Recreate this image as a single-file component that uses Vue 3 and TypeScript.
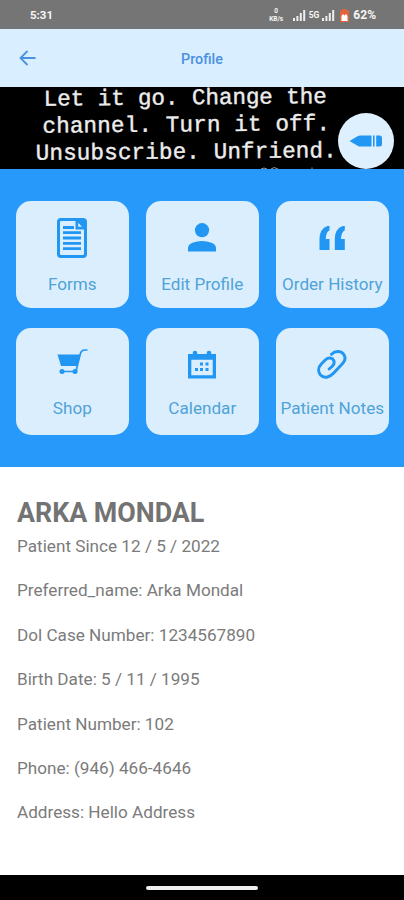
<script setup lang="ts">
interface Tile {
  label: string
  icon: 'forms' | 'person' | 'quote' | 'cart' | 'calendar' | 'link'
}

interface BannerLine {
  text: string
  x: number
  y: number
  width: number
}

const rows: Tile[][] = [
  [
    { label: 'Forms', icon: 'forms' },
    { label: 'Edit Profile', icon: 'person' },
    { label: 'Order History', icon: 'quote' },
  ],
  [
    { label: 'Shop', icon: 'cart' },
    { label: 'Calendar', icon: 'calendar' },
    { label: 'Patient Notes', icon: 'link' },
  ],
]

const bannerLines: BannerLine[] = [
  { text: 'Let it go. Change the', x: 44, y: 17.4, width: 283 },
  { text: 'channel. Turn it off.', x: 42.5, y: 44.4, width: 287.5 },
  { text: 'Unsubscribe. Unfriend.', x: 35.5, y: 71.5, width: 301 },
]

const details: string[] = [
  'Patient Since 12 / 5 / 2022',
  'Preferred_name: Arka Mondal',
  'Dol Case Number: 1234567890',
  'Birth Date: 5 / 11 / 1995',
  'Patient Number: 102',
  'Phone: (946) 466-4646',
  'Address: Hello Address',
]
</script>

<template>
  <div class="screen">
    <div class="status">
      <span class="time">5:31</span>
      <div class="indicators">
        <div class="rate"><span>0</span><span>KB/s</span></div>
        <svg class="signal" width="13" height="12" viewBox="0 0 13 12"><path d="M0 9h2v3H0zM3.4 7h2v5h-2zM6.8 4h2v8h-2zM10.2 1h2v11h-2z" /></svg>
        <span class="network">5G</span>
        <svg class="signal" width="13" height="12" viewBox="0 0 13 12"><path d="M0 9h2v3H0zM3.4 7h2v5h-2zM6.8 4h2v8h-2zM10.2 1h2v11h-2z" /></svg>
        <svg class="battery" width="9" height="13" viewBox="0 0 9 13">
          <path fill="#e2643f" d="M2.5 0h4v1.2H9V13H0V1.2h2.5z" />
          <path fill="#fff" d="M1.5 7L3 5l1.5 1.5L6 5l1.5 2v5h-6z" />
        </svg>
        <span class="percent">62%</span>
      </div>
    </div>

    <header class="header">
      <svg class="back" width="17" height="16" viewBox="0 0 17 16"><path d="M16.5 8H1.5M8.5 1L1.5 8l7 7" /></svg>
      <h1 class="title">Profile</h1>
    </header>

    <div class="banner">
      <svg class="quote" width="404" height="82" viewBox="0 0 404 82">
        <g transform="rotate(-0.5 185 40)">
          <text v-for="line in bannerLines" :key="line.text" :x="line.x" :y="line.y" :textLength="line.width">{{ line.text }}</text>
        </g>
        <path class="cut" d="M261 82q3-2 6 0M271 82q3-3 7 0M312 82v-1.5" />
      </svg>
      <button class="edit" aria-label="Edit">
        <svg width="34" height="12" viewBox="0 0 34 12">
          <path d="M.5 6L9 1q1-.5 2-.5h11.5v11H11q-1 0-2-.5zM24 .5h1.6v11H24zM27.2.5h3.3q2.5 0 2.5 2.5v6q0 2.5-2.5 2.5h-3.3z" />
        </svg>
      </button>
    </div>

    <main class="tiles">
      <div v-for="(row, index) in rows" :key="index" class="row">
        <button v-for="tile in row" :key="tile.label" class="tile">
          <span class="icon" :class="tile.icon">
            <svg v-if="tile.icon === 'forms'" width="30" height="40" viewBox="0 0 30 40">
              <rect x="1.5" y="1.5" width="27" height="37" rx="2.5" class="line" stroke-width="3" />
              <path fill-rule="evenodd" d="M6 8h11v3H6zM18.5 3h9v8.5h-9zM21.2 4.800v4h3.800zM6 13.3h18v2.8H6zM6 18.6h18v2.8H6zM6 23.9h18v2.8H6zM6 29.2h18V32H6z" />
            </svg>
            <svg v-else-if="tile.icon === 'person'" width="28" height="29" viewBox="0 0 28 29">
              <circle cx="14" cy="7.2" r="7.1" />
              <path d="M0 28.5V25q0-3.5 4.5-5.3Q9 18 14 18t9.5 1.7Q28 21.5 28 25v3.5z" />
            </svg>
            <svg v-else-if="tile.icon === 'quote'" width="26" height="26" viewBox="0 0 26 26">
              <path d="M10.5 1v4.3Q7 7 6.7 14h3.8v11H.5V14.5Q.5 3.500 8.5 1z" />
              <path transform="translate(15.3 0)" d="M10.5 1v4.3Q7 7 6.7 14h3.8v11H.5V14.5Q.5 3.500 8.5 1z" />
            </svg>
            <svg v-else-if="tile.icon === 'cart'" width="31" height="26" viewBox="0 0 31 26">
              <path d="M.5 5.5h23L20.3 17H4z" />
              <path class="line" stroke-width="1.7" d="M30.5 1h-3q-3 0-4 3.2L19.5 20v2.5M5 22.5h14.5" />
              <circle cx="5" cy="22.5" r="2.5" /><circle cx="18" cy="22.5" r="2.5" />
            </svg>
            <svg v-else-if="tile.icon === 'calendar'" width="28" height="29" viewBox="0 0 28 29">
              <path fill-rule="evenodd" d="M0 4h28v24.5H0zM3.3 9.7v15.5h21.4V9.7z" />
              <circle cx="7" cy="3" r="2.3" /><circle cx="21" cy="3" r="2.3" />
              <path d="M12 12.5h3v3h-3zM17.5 12.5h3v3h-3zM7 18h3v3H7zM12 18h3v3h-3zM17.5 18h3v3h-3z" />
            </svg>
            <svg v-else width="30" height="30" viewBox="0 0 30 30">
              <path class="line" stroke-width="3" stroke-linecap="round" d="M14.500 4.300C18 .8 24 .5 26.800 4.500c2 3 1.500 6-1 8.700L17 22.800c-4.500 5-10 6-13.500 2.200-3-3.500-2-8 .8-11L8.500 9.800c3-3 7-2.200 8.300.8.8 2.200 0 4-1.300 5.400l-3.300 3" />
            </svg>
          </span>
          <span class="label">{{ tile.label }}</span>
        </button>
      </div>
    </main>

    <section class="info">
      <h2 class="name">ARKA MONDAL</h2>
      <p v-for="detail in details" :key="detail" class="detail">{{ detail }}</p>
    </section>

    <div class="nav"><span class="handle"></span></div>
  </div>
</template>

<style>
body {
  margin: 0;
}
</style>

<style scoped>
.screen {
  display: flex;
  flex-direction: column;
  width: 404px;
  height: 900px;
  overflow: hidden;
  background: #fff;
  font-family: Roboto, sans-serif;
}
.status {
  display: flex;
  flex: 0 0 29px;
  align-items: center;
  justify-content: space-between;
  box-sizing: border-box;
  padding: 1px 28px 0 30px;
  background: #757575;
  color: #f5f5f5;
}
.time {
  font-size: 11.5px;
  font-weight: 700;
}
.indicators {
  display: flex;
  align-items: center;
}
.rate {
  display: flex;
  flex-direction: column;
  align-items: center;
  width: 15px;
  margin-right: 9px;
  font-size: 6.5px;
  font-weight: 700;
  line-height: 8px;
}
.signal {
  fill: #eee;
}
.network {
  margin: 0 3px;
  font-size: 8.5px;
  font-weight: 700;
}
.battery {
  margin: 0 4px 0 5px;
}
.percent {
  font-size: 12px;
  font-weight: 700;
}
.header {
  display: grid;
  flex: 0 0 58px;
  grid-template-columns: 1fr auto 1fr;
  align-items: center;
  box-sizing: border-box;
  padding: 0 19px;
  background: #d9eefe;
}
.back {
  fill: none;
  stroke: #4a91e2;
  stroke-width: 1.8;
}
.title {
  margin: 2px 0 0;
  color: #4a91e2;
  font-size: 14.3px;
  font-weight: 500;
}
.banner {
  position: relative;
  flex: 0 0 82px;
  background: #000;
}
.quote {
  display: block;
}
.banner .quote {
  fill: #ececec;
  stroke: #ececec;
  stroke-width: 0.4;
  font-family: "Liberation Mono", monospace;
  font-size: 22.6px;
}
.banner .cut {
  fill: none;
  stroke: #999;
  stroke-width: 1;
}
.edit {
  position: absolute;
  top: 26px;
  right: 10px;
  display: flex;
  align-items: center;
  justify-content: center;
  width: 56px;
  height: 56px;
  padding: 0;
  border: 0;
  border-radius: 50%;
  background: #deeffd;
}
.edit svg {
  fill: #2196f3;
}
.tiles {
  display: flex;
  flex: 0 0 297px;
  flex-direction: column;
  gap: 20px;
  box-sizing: border-box;
  padding: 32px 16px;
  background: #2699fb;
}
.row {
  display: grid;
  grid-template-columns: repeat(3, 112.6px);
  gap: 17.4px;
  height: 107px;
}
.tile {
  display: flex;
  flex-direction: column;
  align-items: center;
  padding: 0;
  border: 0;
  border-radius: 15px;
  background: #dbeefe;
  font-family: inherit;
}
.icon {
  display: flex;
  align-items: center;
  justify-content: center;
  height: 73px;
  fill: #2196f3;
}
.row + .row .icon {
  height: 70px;
}
.icon.calendar,
.icon.link {
  box-sizing: border-box;
  padding-top: 3px;
}
.icon.cart {
  box-sizing: border-box;
  padding-bottom: 3px;
}
.line {
  fill: none;
  stroke: #2196f3;
}
.label {
  color: #4fa3d6;
  font-size: 17.1px;
  line-height: 20px;
  white-space: nowrap;
}
.info {
  flex: 1;
  padding: 30px 17px 0;
  color: #7b7b7b;
}
.name {
  margin: 0;
  color: #737373;
  font-size: 26.8px;
  font-weight: 700;
  line-height: 32px;
}
.detail {
  margin: 0 0 24.4px;
  font-size: 17.15px;
  line-height: 20px;
}
.name + .detail {
  margin-top: 7px;
}
.nav {
  display: flex;
  flex: 0 0 25px;
  align-items: center;
  justify-content: center;
  background: #000;
}
.handle {
  width: 112px;
  height: 4px;
  border-radius: 2px;
  background: #eee;
}
</style>
